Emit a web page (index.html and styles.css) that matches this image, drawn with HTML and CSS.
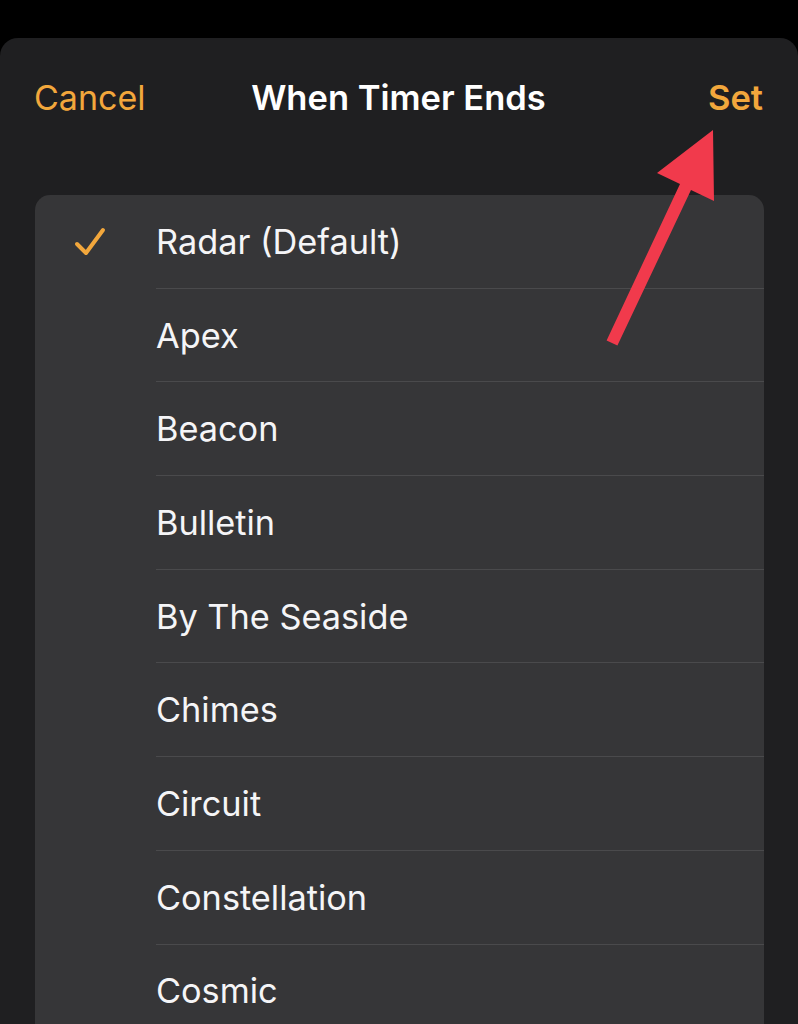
FILE: index.html
```html
<!DOCTYPE html>
<html>
  <head>
    <title>When Timer Ends</title>
    <link rel="stylesheet" href="styles.css">
  </head>
  <body>
    <div class="sheet">
      <div class="header">
        <span class="nav-btn">Cancel</span>
        <span class="title">When Timer Ends</span>
        <span class="nav-btn bold">Set</span>
      </div>

      <div class="card">
        <div class="row">
          <div class="check">
            <svg width="34" height="32" viewBox="0 0 34 32">
              <polyline points="4,18 13,27 30,4" fill="none" stroke="#f2a73c" stroke-width="4" stroke-linecap="round" stroke-linejoin="round"/>
            </svg>
          </div>
          <div class="label">Radar (Default)</div>
        </div>
        <div class="row"><div class="check"></div><div class="label">Apex</div></div>
        <div class="row"><div class="check"></div><div class="label">Beacon</div></div>
        <div class="row"><div class="check"></div><div class="label">Bulletin</div></div>
        <div class="row"><div class="check"></div><div class="label">By The Seaside</div></div>
        <div class="row"><div class="check"></div><div class="label">Chimes</div></div>
        <div class="row"><div class="check"></div><div class="label">Circuit</div></div>
        <div class="row"><div class="check"></div><div class="label">Constellation</div></div>
        <div class="row"><div class="check"></div><div class="label">Cosmic</div></div>
      </div>
    </div>

    <!-- annotation arrow pointing at "Set" -->
    <svg class="arrow" width="798" height="1024" viewBox="0 0 798 1024">
      <polygon points="606.6,340.4 680,184 657,173 713,130 714,201 691,190 617.4,345.6" fill="#f13a4c"/>
    </svg>
  </body>
</html>
```

FILE: styles.css
```css
body {
  margin: 0;
  background: #000;
  font-family: Inter, "Noto Sans", sans-serif;
  color: #f5f5f7;
  height: 1024px;
  overflow: hidden;
}
.sheet {
  margin-top: 38px;
  background: #1f1f21;
  border-radius: 18px 18px 0 0;
  height: 986px;
  overflow: hidden;
}
.header {
  display: flex;
  justify-content: space-between;
  align-items: center;
  height: 118px;
  padding: 0 35px 0 34px;
}
.nav-btn {
  color: #f2a73c;
  font-size: 34px;
  width: 120px;
}
.nav-btn.bold {
  font-size: 34.5px;
  font-weight: 600;
  text-align: right;
}
.title {
  font-size: 34.5px;
  font-weight: 600;
  color: #fff;
}
.card {
  margin: 39px 34px 0 35px;
  background: #363638;
  border-radius: 15px;
}
.row {
  display: flex;
  height: 93.7px;
}
.check {
  width: 121px;
  display: flex;
  align-items: center;
  justify-content: center;
  padding-right: 12px;
  box-sizing: border-box;
}
.label {
  flex: 1;
  display: flex;
  align-items: center;
  font-size: 34.3px;
  border-bottom: 1px solid #4a4a4c;
}
.arrow {
  position: absolute;
  left: 0;
  top: 0;
}
```
